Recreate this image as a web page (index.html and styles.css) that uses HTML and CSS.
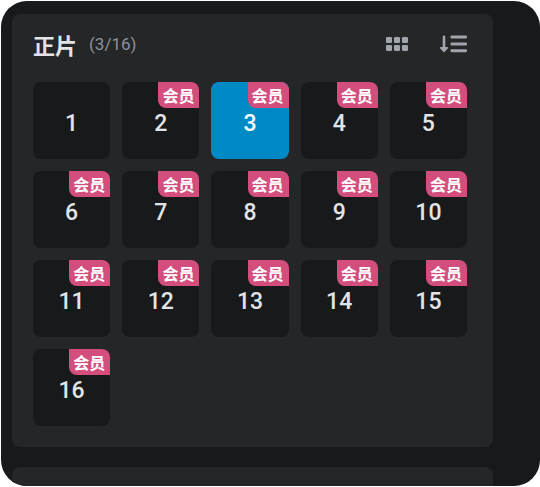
FILE: index.html
```html
<!DOCTYPE html>
<html lang="zh-CN">
<head>
<meta charset="utf-8">
<meta name="viewport" content="width=device-width, initial-scale=1">
<title>正片</title>
<link rel="stylesheet" href="styles.css">
</head>
<body>
<main class="sidebar">
  <section class="panel">
    <header class="panel-header">
      <h1 class="title">正片</h1>
      <span class="count">(3/16)</span>
      <div class="tools">
        <button class="tool" type="button" aria-label="网格视图">
          <svg width="24" height="24" viewBox="0 0 24 24" fill="currentColor" aria-hidden="true">
            <rect x="1" y="5" width="6" height="6" rx="1.3"/><rect x="9" y="5" width="6" height="6" rx="1.3"/><rect x="17" y="5" width="6" height="6" rx="1.3"/>
            <rect x="1" y="13" width="6" height="6" rx="1.3"/><rect x="9" y="13" width="6" height="6" rx="1.3"/><rect x="17" y="13" width="6" height="6" rx="1.3"/>
          </svg>
        </button>
        <button class="tool" type="button" aria-label="排序">
          <svg width="28" height="24" viewBox="0 0 28 24" fill="currentColor" aria-hidden="true">
            <path d="M3.7 4.8a1.3 1.3 0 0 1 2.6 0V15H8.4a.8.8 0 0 1 .6 1.3l-3.2 3.5a1.1 1.1 0 0 1-1.6 0L1 16.3A.8.8 0 0 1 1.6 15h2.1z"/>
            <rect x="11.5" y="3.5" width="16.5" height="3" rx="1.2"/><rect x="11.5" y="10.5" width="16.5" height="3" rx="1.2"/><rect x="11.5" y="17.3" width="16.5" height="3" rx="1.2"/>
          </svg>
        </button>
      </div>
    </header>
    <div class="episodes">
      <button class="episode" type="button">1</button>
      <button class="episode" type="button">2<span class="badge">会员</span></button>
      <button class="episode current" type="button" aria-current="true">3<span class="badge">会员</span></button>
      <button class="episode" type="button">4<span class="badge">会员</span></button>
      <button class="episode" type="button">5<span class="badge">会员</span></button>
      <button class="episode" type="button">6<span class="badge">会员</span></button>
      <button class="episode" type="button">7<span class="badge">会员</span></button>
      <button class="episode" type="button">8<span class="badge">会员</span></button>
      <button class="episode" type="button">9<span class="badge">会员</span></button>
      <button class="episode" type="button">10<span class="badge">会员</span></button>
      <button class="episode" type="button">11<span class="badge">会员</span></button>
      <button class="episode" type="button">12<span class="badge">会员</span></button>
      <button class="episode" type="button">13<span class="badge">会员</span></button>
      <button class="episode" type="button">14<span class="badge">会员</span></button>
      <button class="episode" type="button">15<span class="badge">会员</span></button>
      <button class="episode" type="button">16<span class="badge">会员</span></button>
    </div>
  </section>
  <section class="panel next-panel"></section>
</main>
</body>
</html>
```
FILE: styles.css
```css
* {
  box-sizing: border-box;
}

body {
  margin: 0;
  padding: 1px 0 1px 1px;
  min-height: 100vh;
  display: flex;
  background: #fff;
  font-family: Roboto, "Noto Sans CJK SC", sans-serif;
}

.sidebar {
  flex: 1;
  display: flex;
  flex-direction: column;
  gap: 20px;
  padding: 13px 47px 0 11px;
  border-radius: 26px;
  background: #18191b;
  overflow: hidden;
}

.panel {
  padding: 16px 26px 21px 21px;
  border-radius: 8px;
  background: #252628;
}

.next-panel {
  flex: 1;
  padding: 0;
  border-radius: 8px 8px 0 0;
}

.panel-header {
  display: flex;
  align-items: center;
  height: 28px;
  margin-bottom: 24px;
}

.title {
  margin: 0;
  color: #e3e4e6;
  font-family: "Noto Sans CJK SC", sans-serif;
  font-size: 22px;
  font-weight: 700;
  line-height: 28px;
}

.count {
  margin-left: 12px;
  color: #8e929a;
  font-size: 17px;
  line-height: 28px;
}

.tools {
  display: flex;
  gap: 30px;
  margin-left: auto;
}

.tool {
  display: flex;
  padding: 0;
  border: 0;
  background: none;
  color: #a0a4ab;
  cursor: pointer;
}

.episodes {
  display: grid;
  grid-template-columns: repeat(5, 1fr);
  gap: 12px;
}

.episode {
  position: relative;
  height: 77px;
  padding: 6px 0 0;
  border: 0;
  border-radius: 8px;
  background: #18191b;
  color: #e3e4e6;
  font-family: inherit;
  font-size: 23px;
  font-weight: 500;
  cursor: pointer;
}

.current {
  background: #008ac5;
  color: #fff;
}

.badge {
  position: absolute;
  top: 0;
  right: 0;
  padding: 0 5px 0 4px;
  border-radius: 0 8px;
  background: #d44e7d;
  color: #fff;
  font-family: "Noto Sans CJK SC", sans-serif;
  font-size: 16px;
  font-weight: 700;
  line-height: 26px;
}
```
